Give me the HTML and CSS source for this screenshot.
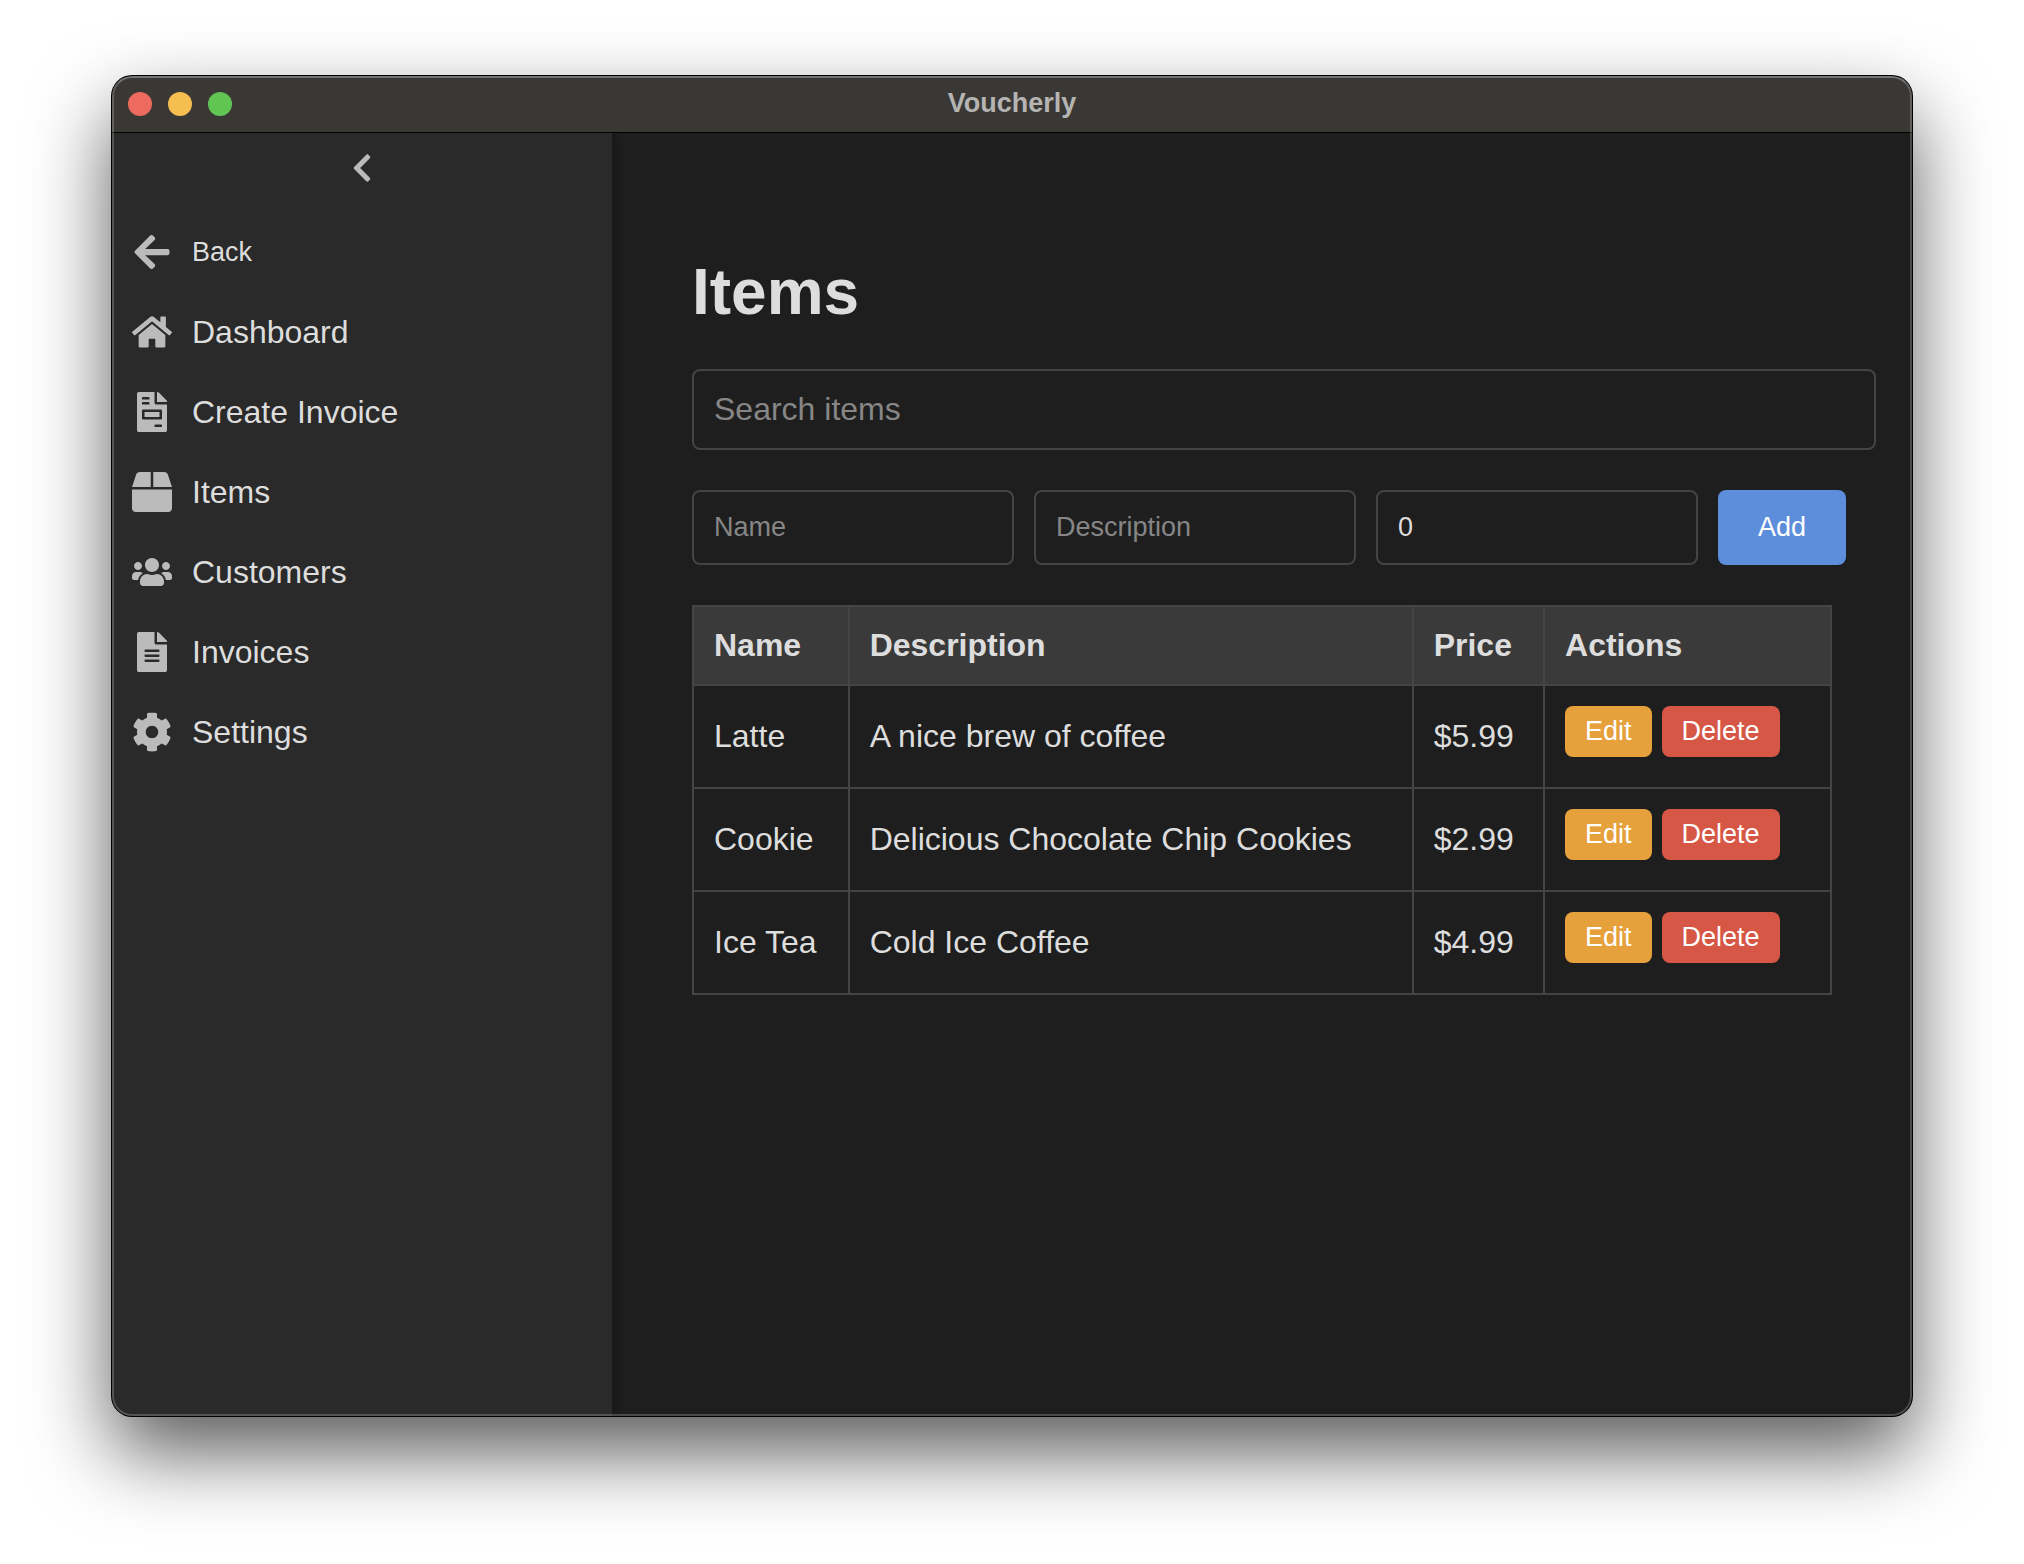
FILE: index.html
```
<!DOCTYPE html>
<html lang="en">
<head>
    <meta charset="UTF-8">
    <meta name="viewport" content="width=device-width, initial-scale=1.0">
    <title>Voucherly</title>
    <link rel="stylesheet" href="styles.css">
</head>
<body>
    <div class="window">
        <header class="titlebar">
            <div class="lights">
                <span class="light close"></span>
                <span class="light minimize"></span>
                <span class="light zoom"></span>
            </div>
            <span class="title">Voucherly</span>
        </header>

        <div class="app">
            <aside class="sidebar">
                <button type="button" class="toggle" aria-label="Collapse sidebar">
                    <svg viewBox="0 0 320 512"><path d="M34.52 239.03L228.87 44.69c9.37-9.37 24.57-9.37 33.94 0l22.67 22.67c9.36 9.36 9.37 24.52.04 33.9L131.49 256l154.02 154.75c9.34 9.38 9.32 24.54-.04 33.9l-22.67 22.67c-9.37 9.37-24.57 9.37-33.94 0L34.52 272.97c-9.37-9.37-9.37-24.57 0-33.94z"/></svg>
                </button>
                <nav class="menu">
                    <button type="button" class="menu-item back">
                        <svg viewBox="0 0 448 512"><path d="M257.5 445.1l-22.2 22.2c-9.4 9.4-24.6 9.4-33.9 0L7 273c-9.4-9.4-9.4-24.6 0-33.9L201.4 44.7c9.4-9.4 24.6-9.4 33.9 0l22.2 22.2c9.5 9.5 9.3 25-.4 34.3L136.6 216H424c13.3 0 24 10.7 24 24v32c0 13.3-10.7 24-24 24H136.6l120.5 114.8c9.8 9.3 10 24.8.4 34.3z"/></svg>
                        <span>Back</span>
                    </button>
                    <a href="#dashboard" class="menu-item">
                        <svg viewBox="0 0 576 512"><path d="M280.37 148.26L96 300.11V464a16 16 0 0 0 16 16l112.06-.29a16 16 0 0 0 15.92-16V368a16 16 0 0 1 16-16h64a16 16 0 0 1 16 16v95.64a16 16 0 0 0 16 16.05L464 480a16 16 0 0 0 16-16V300L295.67 148.26a12.19 12.19 0 0 0-15.3 0zM571.6 251.47L488 182.56V44.05a12 12 0 0 0-12-12h-56a12 12 0 0 0-12 12v72.61L318.47 43a48 48 0 0 0-61 0L4.34 251.47a12 12 0 0 0-1.6 16.9l25.5 31A12 12 0 0 0 45.15 301l235.22-193.74a12.19 12.19 0 0 1 15.3 0L530.9 301a12 12 0 0 0 16.9-1.6l25.5-31a12 12 0 0 0-1.7-16.93z"/></svg>
                        <span>Dashboard</span>
                    </a>
                    <a href="#create-invoice" class="menu-item">
                        <svg viewBox="0 0 384 512"><path d="M288 256H96v64h192v-64zm89-151L279.1 7c-4.5-4.5-10.6-7-17-7H256v128h128v-6.1c0-6.3-2.5-12.4-7-16.9zm-153 31V0H24C10.7 0 0 10.7 0 24v464c0 13.3 10.7 24 24 24h336c13.3 0 24-10.7 24-24V160H248c-13.2 0-24-10.8-24-24zM64 72c0-4.42 3.58-8 8-8h80c4.42 0 8 3.58 8 8v16c0 4.42-3.58 8-8 8H72c-4.42 0-8-3.58-8-8V72zm0 64c0-4.42 3.58-8 8-8h80c4.42 0 8 3.58 8 8v16c0 4.42-3.58 8-8 8H72c-4.42 0-8-3.58-8-8v-16zm256 304c0 4.42-3.58 8-8 8h-80c-4.42 0-8-3.58-8-8v-16c0-4.42 3.58-8 8-8h80c4.42 0 8 3.58 8 8v16zm0-200v96c0 8.84-7.16 16-16 16H80c-8.84 0-16-7.16-16-16v-96c0-8.84 7.16-16 16-16h224c8.84 0 16 7.16 16 16z"/></svg>
                        <span>Create Invoice</span>
                    </a>
                    <a href="#items" class="menu-item">
                        <svg viewBox="0 0 512 512"><path d="M509.5 184.6L458.9 32.8C452.4 13.2 434.1 0 413.4 0H272v192h238.7c-.4-2.5-.4-5-1.2-7.4zM240 0H98.6c-20.7 0-39 13.2-45.5 32.8L2.5 184.6c-.8 2.4-.8 4.9-1.2 7.4H240V0zM0 224v240c0 26.5 21.5 48 48 48h416c26.5 0 48-21.5 48-48V224H0z"/></svg>
                        <span>Items</span>
                    </a>
                    <a href="#customers" class="menu-item">
                        <svg viewBox="0 0 640 512"><path d="M96 224c35.3 0 64-28.7 64-64s-28.7-64-64-64-64 28.7-64 64 28.7 64 64 64zm448 0c35.3 0 64-28.7 64-64s-28.7-64-64-64-64 28.7-64 64 28.7 64 64 64zm32 32h-64c-17.6 0-33.5 7.1-45.1 18.6 40.3 22.1 68.9 62 75.1 109.4h66c17.7 0 32-14.3 32-32v-32c0-35.3-28.7-64-64-64zm-256 0c61.9 0 112-50.1 112-112S381.9 32 320 32 208 82.1 208 144s50.1 112 112 112zm76.8 32h-8.3c-20.8 10-43.9 16-68.5 16s-47.6-6-68.5-16h-8.3C179.6 288 128 339.6 128 403.2V432c0 26.5 21.5 48 48 48h288c26.5 0 48-21.5 48-48v-28.8c0-63.6-51.6-115.2-115.2-115.2zm-223.7-13.4C161.5 263.1 145.6 256 128 256H64c-35.3 0-64 28.7-64 64v32c0 17.7 14.3 32 32 32h65.9c6.3-47.4 34.9-87.3 75.2-109.4z"/></svg>
                        <span>Customers</span>
                    </a>
                    <a href="#invoices" class="menu-item">
                        <svg viewBox="0 0 384 512"><path d="M224 136V0H24C10.7 0 0 10.7 0 24v464c0 13.3 10.7 24 24 24h336c13.3 0 24-10.7 24-24V160H248c-13.2 0-24-10.8-24-24zm64 236c0 6.6-5.4 12-12 12H108c-6.6 0-12-5.4-12-12v-8c0-6.6 5.4-12 12-12h168c6.6 0 12 5.4 12 12v8zm0-64c0 6.6-5.4 12-12 12H108c-6.6 0-12-5.4-12-12v-8c0-6.6 5.4-12 12-12h168c6.6 0 12 5.4 12 12v8zm0-72v8c0 6.6-5.4 12-12 12H108c-6.6 0-12-5.4-12-12v-8c0-6.6 5.4-12 12-12h168c6.6 0 12 5.4 12 12zm96-114.1v6.1H256V0h6.1c6.4 0 12.5 2.5 17 7l97.9 98c4.5 4.5 7 10.6 7 16.9z"/></svg>
                        <span>Invoices</span>
                    </a>
                    <a href="#settings" class="menu-item">
                        <svg viewBox="0 0 512 512"><path d="M487.4 315.7l-42.6-24.6c4.3-23.2 4.3-47 0-70.2l42.6-24.6c4.9-2.8 7.1-8.6 5.5-14-11.1-35.6-30-67.8-54.7-94.6-3.8-4.1-10-5.1-14.8-2.3L380.8 110c-17.9-15.4-38.5-27.3-60.8-35.1V25.8c0-5.6-3.9-10.5-9.4-11.7-36.7-8.2-74.3-7.8-109.2 0-5.5 1.2-9.4 6.1-9.4 11.7V75c-22.2 7.9-42.8 19.8-60.8 35.1L88.7 85.5c-4.9-2.8-11-1.9-14.8 2.3-24.7 26.7-43.6 58.9-54.7 94.6-1.7 5.4.6 11.2 5.5 14L67.3 221c-4.3 23.2-4.3 47 0 70.2l-42.6 24.6c-4.9 2.8-7.1 8.6-5.5 14 11.1 35.6 30 67.8 54.7 94.6 3.8 4.1 10 5.1 14.8 2.3l42.6-24.6c17.9 15.4 38.5 27.3 60.8 35.1v49.2c0 5.6 3.9 10.5 9.4 11.7 36.7 8.2 74.3 7.8 109.2 0 5.5-1.2 9.4-6.1 9.4-11.7v-49.2c22.2-7.9 42.8-19.8 60.8-35.1l42.6 24.6c4.9 2.8 11 1.9 14.8-2.3 24.7-26.7 43.6-58.9 54.7-94.6 1.5-5.5-.7-11.3-5.6-14.1zM256 336c-44.1 0-80-35.9-80-80s35.9-80 80-80 80 35.9 80 80-35.9 80-80 80z"/></svg>
                        <span>Settings</span>
                    </a>
                </nav>
            </aside>

            <main class="content">
                <h1>Items</h1>
                <input type="text" class="search" placeholder="Search items" aria-label="Search items">
                <form class="item-form">
                    <input type="text" name="name" placeholder="Name" aria-label="Name">
                    <input type="text" name="description" placeholder="Description" aria-label="Description">
                    <input type="number" name="price" value="0" aria-label="Price">
                    <button type="submit" class="btn add">Add</button>
                </form>
                <table class="items">
                    <thead>
                        <tr>
                            <th>Name</th>
                            <th>Description</th>
                            <th>Price</th>
                            <th>Actions</th>
                        </tr>
                    </thead>
                    <tbody>
                        <tr>
                            <td>Latte</td>
                            <td>A nice brew of coffee</td>
                            <td>$5.99</td>
                            <td><button type="button" class="btn edit">Edit</button><button type="button" class="btn delete">Delete</button></td>
                        </tr>
                        <tr>
                            <td>Cookie</td>
                            <td>Delicious Chocolate Chip Cookies</td>
                            <td>$2.99</td>
                            <td><button type="button" class="btn edit">Edit</button><button type="button" class="btn delete">Delete</button></td>
                        </tr>
                        <tr>
                            <td>Ice Tea</td>
                            <td>Cold Ice Coffee</td>
                            <td>$4.99</td>
                            <td><button type="button" class="btn edit">Edit</button><button type="button" class="btn delete">Delete</button></td>
                        </tr>
                    </tbody>
                </table>
            </main>
        </div>
    </div>
</body>
</html>
```
FILE: styles.css
```
* {
    box-sizing: border-box;
}
body {
    font-family: "Liberation Sans", Arial, sans-serif;
    font-size: 32px;
    background: #fff;
    color: #ddd;
    margin: 0;
    padding: 76px 112px 148px;
    min-height: 100vh;
    display: flex;
}

/* window frame */
.window {
    position: relative;
    flex: 1;
    min-width: 0;
    display: flex;
    flex-direction: column;
    border-radius: 20px;
    overflow: hidden;
    background: #1e1e1e;
    box-shadow: 0 0 0 1px #000, 0 36px 80px rgba(0, 0, 0, 0.65);
}
.window::after {
    content: "";
    position: absolute;
    inset: 0;
    border: 2px solid rgba(255, 255, 255, 0.2);
    border-top-color: rgba(255, 255, 255, 0.3);
    border-radius: 20px;
    pointer-events: none;
    z-index: 3;
}
.titlebar {
    display: grid;
    grid-template-columns: 1fr auto 1fr;
    align-items: center;
    height: 56px;
    padding: 0 16px;
    background: #3a3835;
    box-shadow: 0 1px 0 #000;
    z-index: 2;
}
.lights {
    display: flex;
    gap: 16px;
}
.light {
    width: 24px;
    height: 24px;
    border-radius: 50%;
}
.close {
    background: #ed6a5e;
}
.minimize {
    background: #f5bf4f;
}
.zoom {
    background: #61c554;
}
.title {
    padding-bottom: 2px;
    font-size: 27px;
    font-weight: bold;
    color: #b5b4b3;
}
.app {
    flex: 1;
    display: flex;
}

/* sidebar */
.sidebar {
    flex: 0 0 500px;
    padding: 20px;
    background: #2a2a2a;
    box-shadow: 4px 0 10px rgba(0, 0, 0, 0.2);
    z-index: 1;
}
.sidebar svg {
    display: block;
    fill: #bbb;
}
.toggle {
    display: block;
    margin: 0 auto 28px;
    padding: 0;
    border: none;
    background: none;
    cursor: pointer;
}
.toggle svg {
    width: 32px;
    height: 32px;
}
.menu {
    display: flex;
    flex-direction: column;
}
.menu-item {
    display: flex;
    align-items: center;
    gap: 20px;
    padding: 20px 0;
    border: none;
    background: none;
    color: #ddd;
    font-family: inherit;
    text-decoration: none;
    cursor: pointer;
}
.menu-item svg {
    width: 40px;
    height: 40px;
}
.back {
    font-size: 27px;
}

/* items page */
.content {
    flex: 1;
    min-width: 0;
    padding: 80px;
}
h1 {
    font-size: 64px;
    margin: 43px 0 40px;
}
input {
    box-sizing: content-box;
    padding: 20px;
    border: 2px solid #444;
    border-radius: 8px;
    background: #1e1e1e;
    color: #ddd;
    font-family: inherit;
    font-size: 27px;
}
input::placeholder {
    color: #868686;
}
input[type="number"] {
    appearance: textfield;
}
.search {
    display: block;
    width: 100%;
    margin-bottom: 40px;
    font-size: 32px;
}
.item-form {
    display: flex;
    gap: 20px;
    margin-bottom: 40px;
}
.item-form input {
    flex: none;
    width: 278px;
}
.btn {
    border: none;
    border-radius: 8px;
    color: #fff;
    font-family: inherit;
    font-size: 27px;
    cursor: pointer;
}
.add {
    padding: 20px 40px;
    background: #5c8edc;
}
.items {
    width: 100%;
    border-collapse: collapse;
}
.items th,
.items td {
    padding: 20px;
    border: 2px solid #444;
    text-align: left;
}
.items th {
    background: #3a3a3a;
}
.edit,
.delete {
    padding: 10px 20px;
    margin: 0 10px 10px 0;
}
.edit {
    background: #e6a03c;
}
.delete {
    background: #d65745;
}
```
